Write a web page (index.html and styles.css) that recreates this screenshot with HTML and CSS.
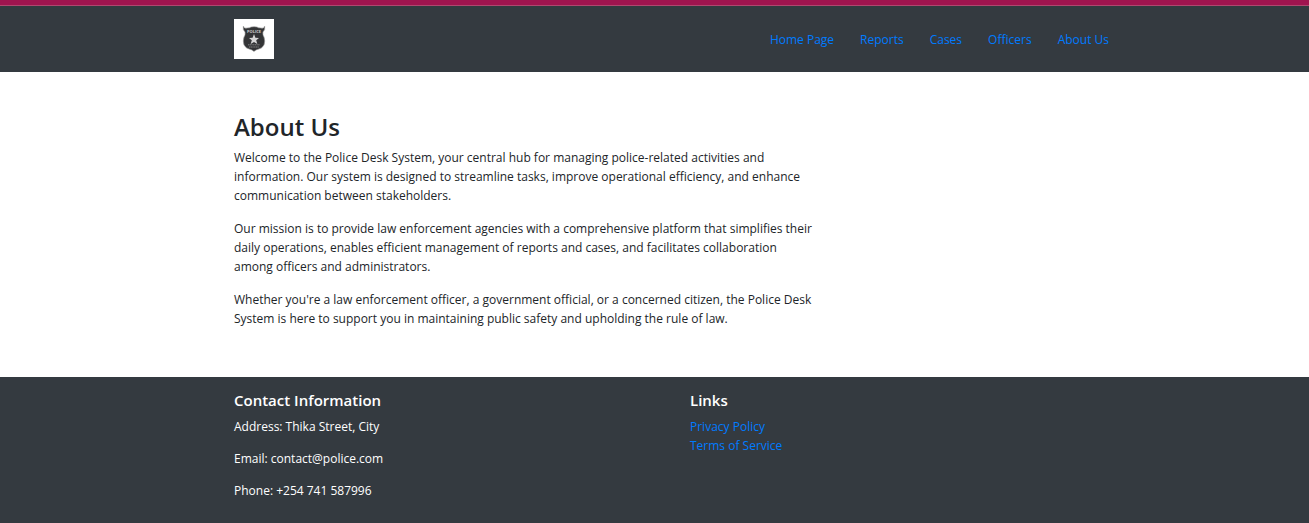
FILE: index.html
```html
<!DOCTYPE html>
<html lang="en">
<head>
<meta charset="utf-8">
<meta name="viewport" content="width=device-width, initial-scale=1">
<title>About Us</title>
<link rel="stylesheet" href="styles.css">
</head>
<body>
<div class="accent"></div>
<header class="band header">
  <div class="container header-row">
    <a class="logo" href="#" aria-label="Police Desk home">
      <svg viewBox="0 0 40 40" width="40" height="40" aria-hidden="true">
        <rect width="40" height="40" fill="#fff"/>
        <path d="M9.300 7 Q10 10 13 9 Q16 9 17 8 Q20 7.300 23 8 Q24 9 27 9 Q30 10 30.700 7 Q31.500 11 29 13 Q28.500 16 30 18 Q31.500 22 30 26 Q28.500 29 25 30 Q22 30.500 20 32.500 Q18 30.500 15 30 Q11.500 29 10 26 Q8.500 22 10 18 Q11.500 16 11 13 Q8.500 11 9.300 7Z" fill="#333436" stroke="#a5a5a5" stroke-width=".6"/>
        <path d="M20 15 L21.400 18.700 L25 18.900 L22.200 21.300 L23.300 25 L20 22.900 L16.700 25 L17.800 21.300 L15 18.900 L18.600 18.700Z" fill="#d6d6d6"/>
        <text x="20" y="14.200" class="badge-title">POLICE</text>
        <path d="M14 25.800H26M15 28H25" stroke="#8a8a8a" stroke-width=".9" stroke-dasharray="1.300 .4"/>
      </svg>
    </a>
    <nav class="nav" aria-label="Main">
      <a href="#">Home Page</a>
      <a href="#">Reports</a>
      <a href="#">Cases</a>
      <a href="#">Officers</a>
      <a href="#">About Us</a>
    </nav>
  </div>
</header>
<main class="main">
  <div class="container">
    <div class="article">
      <h1>About Us</h1>
      <p>Welcome to the Police Desk System, your central hub for managing police-related activities and information. Our system is designed to streamline tasks, improve operational efficiency, and enhance communication between stakeholders.</p>
      <p>Our mission is to provide law enforcement agencies with a comprehensive platform that simplifies their daily operations, enables efficient management of reports and cases, and facilitates collaboration among officers and administrators.</p>
      <p>Whether you're a law enforcement officer, a government official, or a concerned citizen, the Police Desk System is here to support you in maintaining public safety and upholding the rule of law.</p>
    </div>
  </div>
</main>
<footer class="band footer">
  <div class="container footer-row">
    <section>
      <h2>Contact Information</h2>
      <p>Address: Thika Street, City</p>
      <p>Email: contact@police.com</p>
      <p>Phone: +254 741 587996</p>
    </section>
    <section>
      <h2>Links</h2>
      <ul>
        <li><a href="#">Privacy Policy</a></li>
        <li><a href="#">Terms of Service</a></li>
      </ul>
    </section>
  </div>
</footer>
</body>
</html>
```

FILE: styles.css
```css
* { box-sizing: border-box; }

body {
  display: flex;
  flex-direction: column;
  min-height: 100vh;
  margin: 0;
  background: #fff;
  color: #212529;
  font: 12px/19px "Open Sans", "Noto Sans", sans-serif;
}

h1, h2, p, ul { margin: 0; padding: 0; }
ul { list-style: none; }
a { color: #007bff; text-decoration: none; }
a:hover { text-decoration: underline; }

.accent {
  height: 6px;
  background: #a0144f;
  border-bottom: 1px solid #b0476f;
}

.band { background: #343a40; color: #fff; }

.header, .main, .footer { padding-left: 47px; }

.container {
  max-width: 912px;
  margin: 0 auto;
  padding: 0 12px;
}

.header-row {
  display: flex;
  align-items: center;
  justify-content: space-between;
  padding-top: 13px;
  padding-bottom: 13px;
}

.logo, .logo svg { display: block; }

.badge-title {
  fill: #ccc;
  font: bold 4px "Open Sans", sans-serif;
  text-anchor: middle;
}

.nav { display: flex; gap: 26px; padding-right: 13px; }

.main { padding-top: 39px; padding-bottom: 35px; }

.article { max-width: 584px; }
.article p { margin-bottom: 14px; }

h1 {
  margin-bottom: 6px;
  font-size: 24px;
  font-weight: 600;
  line-height: 31px;
}

.footer { flex: 1; }

.footer-row {
  display: grid;
  grid-template-columns: 1fr 1fr;
  column-gap: 24px;
  padding-top: 14px;
  padding-bottom: 10px;
}

.footer-row h2 {
  margin-bottom: 7px;
  font-size: 15px;
  font-weight: 600;
  line-height: 19px;
}

.footer-row p { margin-bottom: 13px; }
```
